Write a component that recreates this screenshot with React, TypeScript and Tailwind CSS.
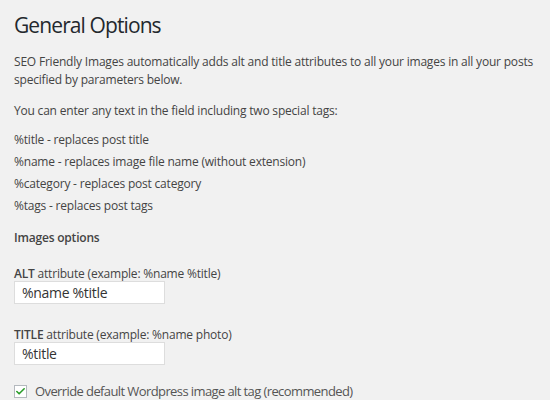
import { Check } from 'lucide-react';

const tags = [
  '%title - replaces post title',
  '%name - replaces image file name (without extension)',
  '%category - replaces post category',
  '%tags - replaces post tags',
];

export default function App() {
  return (
    <div className="w-[550px] h-[400px] overflow-hidden bg-[#f1f1f1] px-[14px] pt-[11px] text-[12px] tracking-[-0.2px] text-[#444] font-['Open_Sans',sans-serif]">
      <h1 className="text-[21px] leading-[28px] tracking-[-0.9px] text-[#23282d] font-normal">General Options</h1>

      <p className="mt-[14px] leading-[18px] whitespace-nowrap">
        SEO Friendly Images automatically adds alt and title attributes to all your images in all your posts
        <br />
        specified by parameters below.
      </p>

      <p className="mt-[13px] leading-[18px]">You can enter any text in the field including two special tags:</p>

      <div className="mt-[11px] flex flex-col gap-[4px]">
        {tags.map((t) => (
          <p key={t} className="leading-[18px]">{t}</p>
        ))}
      </div>

      <h3 className="mt-[14px] leading-[18px] font-semibold">Images options</h3>

      <div className="mt-[18px]">
        <label className="block leading-[18px]">
          <span className="font-semibold">ALT</span> attribute (example: %name %title)
        </label>
        <input
          readOnly
          value="%name %title"
          className="-mt-[2px] w-[151px] h-[23px] px-[7px] bg-white border border-[#ddd] text-[14px] tracking-[-0.3px] text-[#333] outline-none"
        />
      </div>

      <div className="mt-[22px]">
        <label className="block leading-[18px]">
          <span className="font-semibold">TITLE</span> attribute (example: %name photo)
        </label>
        <input
          readOnly
          value="%title"
          className="-mt-[2px] w-[151px] h-[23px] px-[7px] bg-white border border-[#ddd] text-[14px] tracking-[-0.3px] text-[#333] outline-none"
        />
      </div>

      <div className="mt-[17px] flex items-center gap-[8px]">
        <span className="w-[13px] h-[13px] bg-white border border-[#b4b9be] flex items-center justify-center">
          <Check className="w-[11px] h-[11px] text-[#2a9d2a]" strokeWidth={3.5} />
        </span>
        <span className="text-[13px] tracking-[-0.6px] leading-[18px] text-[#555]">Override default Wordpress image alt tag (recommended)</span>
      </div>
    </div>
  );
}
